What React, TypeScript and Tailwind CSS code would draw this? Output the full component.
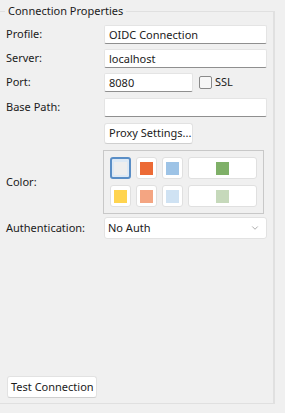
import { ChevronDown } from 'lucide-react'

const swatches = [
  { color: 'bg-[#eeeeee]', selected: true },
  { color: 'bg-[#ec6a35]' },
  { color: 'bg-[#9dc3e6]' },
  { color: 'bg-[#7fb068]', wide: true },
  { color: 'bg-[#ffd44f]' },
  { color: 'bg-[#f4a582]' },
  { color: 'bg-[#cfe2f3]' },
  { color: 'bg-[#c6d9bb]', wide: true },
]

function TextBox({ value, className = '' }: { value: string; className?: string }) {
  return (
    <div
      className={`h-[19px] bg-white border border-[#e4e4e4] border-b-[#8f8f8f] rounded-[2px] pl-[4px] flex items-center text-[11px] leading-none whitespace-nowrap text-[#1b1b1b] ${className}`}
    >
      {value}
    </div>
  )
}

function Row({ label, children, className = '' }: { label: string; children: React.ReactNode; className?: string }) {
  return (
    <div className={`flex items-center ${className}`}>
      <div className="w-[104px] pl-[6px] text-[11px] whitespace-nowrap text-[#1b1b1b]">{label}</div>
      {children}
    </div>
  )
}

export default function App() {
  return (
    <div className="w-[285px] h-[413px] bg-[#f0f0f0] overflow-hidden" style={{ fontFamily: '"Noto Sans", "Liberation Sans", sans-serif' }}>
      <div className="mt-[11px] w-[275px] h-[393px] border-t border-r-2 border-b border-[#e0e0e0] flex flex-col">
        <div className="-mt-[9px] flex">
          <span className="ml-[5px] px-[3px] bg-[#f0f0f0] text-[11px] leading-[16px] whitespace-nowrap text-[#1b1b1b]">Connection Properties</span>
        </div>

        <Row label="Profile:" className="mt-[6px]">
          <TextBox value="OIDC Connection" className="w-[163px]" />
        </Row>
        <Row label="Server:" className="mt-[5px]">
          <TextBox value="localhost" className="w-[163px]" />
        </Row>
        <Row label="Port:" className="mt-[5px]">
          <TextBox value="8080" className="w-[89px]" />
          <div className="ml-[6px] w-[13px] h-[13px] rounded-[2px] border border-[#8a8a8a] bg-[#f7f7f7]" />
          <span className="ml-[3px] text-[11px] text-[#1b1b1b]">SSL</span>
        </Row>
        <Row label="Base Path:" className="mt-[6px]">
          <TextBox value="" className="w-[163px]" />
        </Row>

        <div className="mt-[6px] ml-[104px] w-[89px] h-[21px] bg-white border border-[#e2e2e2] border-b-[#cfcfcf] rounded-[3px] pl-[4px] flex items-center text-[11px] whitespace-nowrap text-[#1b1b1b]">
          Proxy Settings...
        </div>

        <Row label="Color:" className="mt-[6px]">
          <div className="-ml-[1px] w-[161px] border border-[#c8c8c8] p-[6px] grid grid-cols-[21px_21px_21px_1fr] gap-x-[5px] gap-y-[6px]">
            {swatches.map((s, i) => (
              <div
                key={i}
                className={`h-[22px] rounded-[3px] flex items-center justify-center ${
                  s.selected ? 'border-2 border-[#5a8ec6] bg-[#dde9f5]' : 'border border-[#e0e0e0] bg-white'
                }`}
              >
                <div className={`w-[13px] h-[13px] ${s.color}`} />
              </div>
            ))}
          </div>
        </Row>

        <Row label="Authentication:" className="mt-[3px]">
          <div className="w-[163px] h-[22px] bg-white border border-[#e2e2e2] rounded-[3px] pl-[3px] pr-[6px] flex items-center justify-between text-[11px] text-[#1b1b1b]">
            <span>No Auth</span>
            <ChevronDown size={10} strokeWidth={1.5} className="text-[#7a7a7a]" />
          </div>
        </Row>

        <div className="mt-auto mb-[5px] ml-[7px] w-[90px] h-[22px] bg-white border border-[#e2e2e2] border-b-[#cfcfcf] rounded-[3px] pl-[3px] flex items-center text-[11px] whitespace-nowrap text-[#1b1b1b]">
          Test Connection
        </div>
      </div>
    </div>
  )
}
